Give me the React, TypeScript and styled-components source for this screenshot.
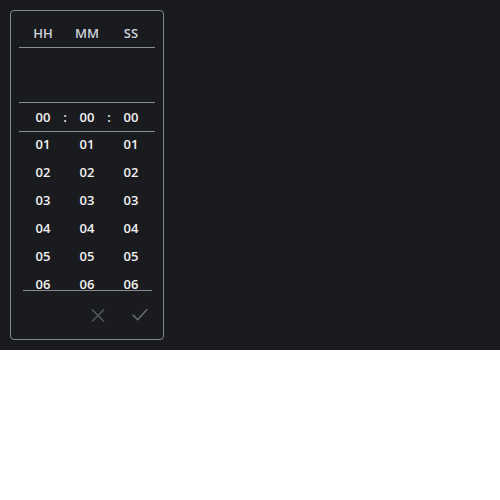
import React from "react";
import styled, { createGlobalStyle } from "styled-components";

const Global = createGlobalStyle`
  html, body { margin: 0; padding: 0; background: #ffffff; }
  body { font-family: "Open Sans", "Noto Sans", sans-serif; }
`;

const Page = styled.div`
  background: #1a1b1f;
  height: 350px;
  padding: 10px;
  box-sizing: border-box;
`;

const Panel = styled.div`
  width: 154px;
  height: 330px;
  box-sizing: border-box;
  border: 1px solid #85888e;
  border-radius: 4px;
  display: flex;
  flex-direction: column;
`;

const Columns = styled.div`
  display: grid;
  grid-template-columns: 44px 44px 44px;
  justify-content: center;
`;

const Header = styled(Columns)`
  margin: 0 8px;
  padding: 9px 0 1px;
  line-height: 26px;
  border-bottom: 1px solid #8a8d93;
  color: #cdd2d9;
  font-size: 13px;
  font-weight: 600;
  text-align: center;
`;

const Spacer = styled.div`
  height: 54px;
  flex: none;
`;

const Selected = styled.div`
  margin: 0 8px;
  height: 28px;
  border-top: 1px solid #8a8d93;
  border-bottom: 1px solid #8a8d93;
  display: grid;
  grid-template-columns: 44px 0 44px 0 44px;
  justify-content: center;
  align-items: center;
  color: #f2f2f2;
  font-size: 13px;
  font-weight: 600;
  text-align: center;
  flex: none;
`;

const Colon = styled.span`
  display: flex;
  justify-content: center;
  width: 0;
`;

const List = styled.div`
  height: 158px;
  overflow: hidden;
  flex: none;
`;

const Row = styled(Columns)`
  height: 28px;
  box-sizing: border-box;
  padding-bottom: 4px;
  line-height: 24px;
  color: #f2f2f2;
  font-size: 13px;
  font-weight: 600;
  text-align: center;
`;

const Divider = styled.div`
  height: 1px;
  margin: 0 11px 0 12px;
  background: #8a8d93;
  flex: none;
`;

const Footer = styled.div`
  height: 48px;
  display: flex;
  justify-content: flex-end;
  align-items: center;
  gap: 10px;
  padding-right: 7px;
  flex: none;
`;

const IconButton = styled.button<{ $tone: string }>`
  width: 32px;
  height: 32px;
  padding: 0;
  border: none;
  background: transparent;
  color: ${(p) => p.$tone};
  display: flex;
  align-items: center;
  justify-content: center;
  cursor: pointer;
`;

const rows = ["01", "02", "03", "04", "05", "06", "07"];

export default function App() {
  return (
    <>
      <Global />
      <Page>
        <Panel>
          <Header>
            <span>HH</span>
            <span>MM</span>
            <span>SS</span>
          </Header>
          <Spacer />
          <Selected>
            <span>00</span>
            <Colon>:</Colon>
            <span>00</span>
            <Colon>:</Colon>
            <span>00</span>
          </Selected>
          <List>
            {rows.map((r) => (
              <Row key={r}>
                <span>{r}</span>
                <span>{r}</span>
                <span>{r}</span>
              </Row>
            ))}
          </List>
          <Divider />
          <Footer>
            <IconButton $tone="#55585e" aria-label="Cancel">
              <svg width="16" height="16" viewBox="0 0 16 16" fill="none" stroke="currentColor" strokeWidth="1.5" strokeLinecap="round">
                <path d="M2.5 3 L13.5 14 M13.5 3 L2.5 14" />
              </svg>
            </IconButton>
            <IconButton $tone="#6a6d73" aria-label="Confirm">
              <svg width="16" height="16" viewBox="0 0 16 16" fill="none" stroke="currentColor" strokeWidth="1.5" strokeLinecap="round" strokeLinejoin="round">
                <path d="M1 8 L5.7 12.7 L15 2.5" />
              </svg>
            </IconButton>
          </Footer>
        </Panel>
      </Page>
    </>
  );
}
